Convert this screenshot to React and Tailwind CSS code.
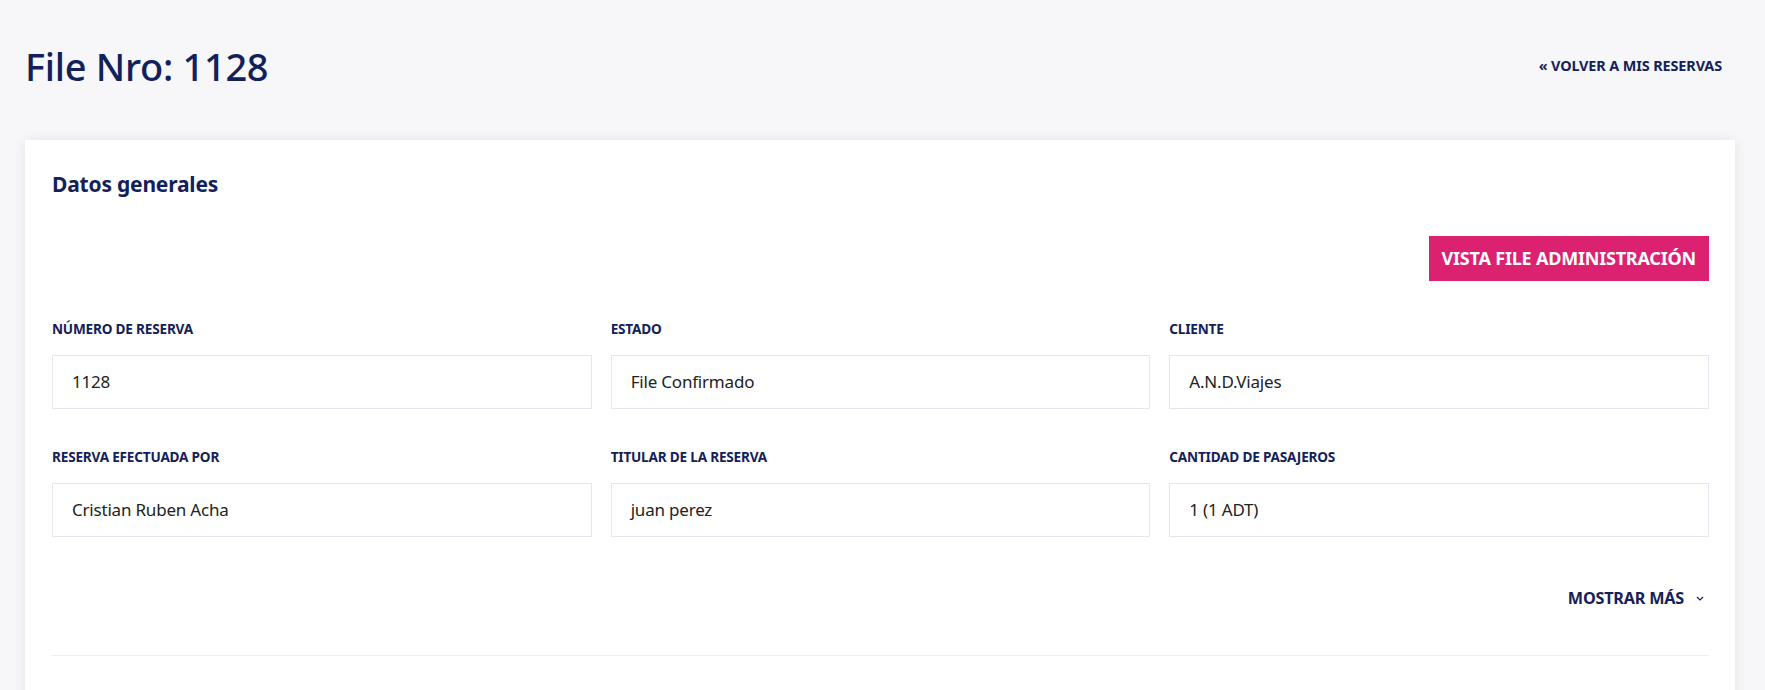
import React from 'react';

const fields = [
  { label: 'NÚMERO DE RESERVA', value: '1128' },
  { label: 'ESTADO', value: 'File Confirmado' },
  { label: 'CLIENTE', value: 'A.N.D.Viajes' },
  { label: 'RESERVA EFECTUADA POR', value: 'Cristian Ruben Acha' },
  { label: 'TITULAR DE LA RESERVA', value: 'juan perez' },
  { label: 'CANTIDAD DE PASAJEROS', value: '1 (1 ADT)' },
];

function Field({ label, value }) {
  return (
    <div className="flex flex-col">
      <label className="h-[18px] text-[13.6px] leading-[18px] font-bold text-[#13215a] tracking-[-0.2px] pt-[1px]">{label}</label>
      <div className="mt-[18px] h-[54px] border border-[#e3e7f0] bg-white flex items-center pl-[19px] text-[17px] text-[#222] tracking-[-0.2px]">
        {value}
      </div>
    </div>
  );
}

export default function App() {
  return (
    <div
      className="min-h-screen bg-[#f7f7f9] pl-[25px] pr-[30px] pt-[41px]"
      style={{ fontFamily: '"Noto Sans", "Open Sans", sans-serif' }}
    >
      {/* Header */}
      <div className="flex items-center justify-between">
        <h1 className="text-[38px] leading-[50px] font-medium text-[#13215a] tracking-[-0.3px]">File Nro: 1128</h1>
        <a href="#" className="mr-[13px] text-[14.4px] font-bold text-[#13215a] tracking-[-0.1px]">« VOLVER A MIS RESERVAS</a>
      </div>

      {/* Card */}
      <div className="mt-[49px] bg-white shadow-[0_0_12px_rgba(0,0,0,0.08)] pl-[27px] pr-[26px] pt-[30px] pb-[40px]">
        <h2 className="text-[21px] leading-[28px] font-bold text-[#13215a] tracking-[-0.2px]">Datos generales</h2>

        <div className="mt-[38px] flex justify-end">
          <button className="h-[45px] px-[13px] bg-[#dc2171] text-white text-[18px] font-bold tracking-[-0.2px]">
            VISTA FILE ADMINISTRACIÓN
          </button>
        </div>

        <div className="mt-[38px] grid grid-cols-3 gap-x-[19px] gap-y-[38px]">
          {fields.map((f) => (
            <Field key={f.label} label={f.label} value={f.value} />
          ))}
        </div>

        <div className="mt-[50px] flex justify-end items-center h-[22px]">
          <span className="text-[16.2px] font-bold text-[#13215a] tracking-[-0.2px]">MOSTRAR MÁS</span>
          <svg className="ml-[12px] mr-[5px]" width="8" height="5" viewBox="0 0 8 5" fill="none">
            <path d="M1 1l3 3 3-3" stroke="#13215a" strokeWidth="1.2" />
          </svg>
        </div>

        <div className="mt-[46px] border-t border-[#efefef]" />
        <div className="h-[60px]" />
      </div>
    </div>
  );
}
